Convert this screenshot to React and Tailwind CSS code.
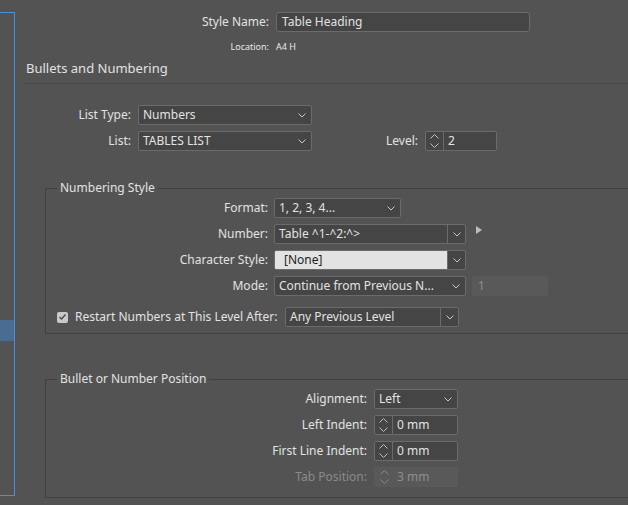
import React from "react";

const Chevron = () => (
  <svg width="8" height="5" viewBox="0 0 8 5" className="text-[#c8c8c8]">
    <polyline points="0.5,0.5 4,4 7.5,0.5" fill="none" stroke="currentColor" strokeWidth="1" />
  </svg>
);

const UpDown = () => (
  <svg width="9" height="14" viewBox="0 0 9 14" className="text-[#bdbdbd]">
    <polyline points="0.5,4.5 4.5,0.5 8.5,4.5" fill="none" stroke="currentColor" strokeWidth="1" />
    <polyline points="0.5,9.5 4.5,13.5 8.5,9.5" fill="none" stroke="currentColor" strokeWidth="1" />
  </svg>
);

const Select = ({ w, value, split, light }) => (
  <div className={`h-[20px] flex shrink-0 border border-[#6b6b6b] rounded-[2px] bg-[#454545] overflow-hidden ${w}`}>
    <div
      className={`flex-1 flex items-center whitespace-nowrap overflow-hidden ${
        light ? "bg-[#e2e2e2] text-[#1e1e1e] pl-[9px]" : "pl-[4px]"
      }`}
    >
      {value}
    </div>
    <div className={`w-[18px] flex items-center justify-center ${split ? "border-l border-[#6b6b6b]" : ""}`}>
      <Chevron />
    </div>
  </div>
);

const Spinner = ({ w, value, disabled }) => (
  <div
    className={`h-[20px] flex shrink-0 rounded-[2px] ${w} ${
      disabled ? "bg-[#595959] text-[#8e8e8e] border border-[#595959]" : "bg-[#454545] border border-[#6b6b6b]"
    }`}
  >
    <div
      className={`w-[18px] flex items-center justify-center ${disabled ? "opacity-50" : "border-r border-[#6b6b6b]"}`}
    >
      <UpDown />
    </div>
    <div className="pl-[4px] flex items-center">{value}</div>
  </div>
);

const Row = ({ label, labelW, gap, children, dim, className = "" }) => (
  <div className={`flex items-center h-[20px] ${className}`}>
    <div className={`text-right whitespace-nowrap shrink-0 ${labelW} ${gap} ${dim ? "text-[#8a8a8a]" : ""}`}>
      {label}
    </div>
    {children}
  </div>
);

export default function App() {
  return (
    <div
      className="w-[628px] h-[505px] bg-[#535353] text-[#e2e2e2] text-[12px] leading-[16px] flex overflow-hidden"
      style={{ fontFamily: '"Noto Sans", "Open Sans", sans-serif' }}
    >
      {/* left list panel */}
      <div className="w-[15px] h-[484px] mt-[12px] shrink-0 border-t border-r border-b border-[#4b8fd8]">
        <div className="h-[307px]" />
        <div className="h-[21px] bg-[#4a6b92]" />
      </div>

      <div className="flex-1 flex flex-col min-w-0">
        <Row label="Style Name:" labelW="w-[254px]" gap="mr-[7px]" className="mt-[12px]">
          <div className="w-[254px] h-[20px] flex items-center pl-[5px] bg-[#454545] border border-[#6b6b6b] rounded-[3px] shrink-0">
            Table Heading
          </div>
        </Row>

        <div className="flex items-center h-[12px] mt-[9px] text-[9px] leading-[12px] text-[#e8e8e8]">
          <div className="w-[254px] mr-[7px] text-right">Location:</div>
          <div>A4 H</div>
        </div>

        <div className="ml-[10px] mt-[7px]">
          <div className="pl-[1px] h-[16px] text-[13px] leading-[16px]">Bullets and Numbering</div>
          <div className="mt-[7px] h-px bg-[#474747]" />
        </div>

        <Row label="List Type:" labelW="w-[116px]" gap="mr-[7px]" className="mt-[21px]">
          <Select w="w-[174px]" value="Numbers" />
        </Row>
        <Row label="List:" labelW="w-[116px]" gap="mr-[7px]" className="mt-[6px]">
          <Select w="w-[174px]" value="TABLES LIST" />
          <div className="w-[106px] mr-[7px] text-right">Level:</div>
          <Spinner w="w-[72px]" value="2" />
        </Row>

        <fieldset className="ml-[30px] mt-[29px] w-[620px] shrink-0 border border-[#414141] pb-[6px]">
          <legend className="ml-[11px] px-[3px] leading-[16px]">Numbering Style</legend>
          <Row label="Format:" labelW="w-[222px]" gap="mr-[6px]" className="mt-[2px]">
            <Select w="w-[127px]" value="1, 2, 3, 4..." />
          </Row>
          <Row label="Number:" labelW="w-[222px]" gap="mr-[6px]" className="mt-[6px]">
            <Select w="w-[192px]" value="Table ^1-^2:^>" split />
            <svg width="6" height="8" viewBox="0 0 6 8" className="ml-[10px] self-start mt-[2px]">
              <polygon points="0,0 6,4 0,8" fill="#bcbcbc" />
            </svg>
          </Row>
          <Row label="Character Style:" labelW="w-[222px]" gap="mr-[6px]" className="mt-[6px]">
            <Select w="w-[192px]" value="[None]" split light />
          </Row>
          <Row label="Mode:" labelW="w-[222px]" gap="mr-[6px]" className="mt-[6px]">
            <Select w="w-[192px]" value="Continue from Previous N..." />
            <div className="ml-[6px] w-[76px] h-[20px] bg-[#595959] text-[#8e8e8e] flex items-center pl-[6px] rounded-[2px]">
              1
            </div>
          </Row>
          <div className="flex items-center h-[20px] mt-[11px] pl-[11px]">
            <div className="w-[11px] h-[11px] rounded-[2px] bg-[#c9c9c9] flex items-center justify-center shrink-0">
              <svg width="9" height="8" viewBox="0 0 9 8">
                <polyline points="1.5,4 3.5,6 7.5,1.5" fill="none" stroke="#4a4a4a" strokeWidth="1.4" />
              </svg>
            </div>
            <div className="ml-[7px] w-[202px] mr-[8px] whitespace-nowrap">Restart Numbers at This Level After:</div>
            <Select w="w-[174px]" value="Any Previous Level" split />
          </div>
        </fieldset>

        <fieldset className="ml-[30px] mt-[37px] w-[620px] shrink-0 border border-[#414141] pb-[10px]">
          <legend className="ml-[11px] px-[3px] leading-[16px]">Bullet or Number Position</legend>
          <Row label="Alignment:" labelW="w-[321px]" gap="mr-[7px]" className="mt-[2px]">
            <Select w="w-[84px]" value="Left" />
          </Row>
          <Row label="Left Indent:" labelW="w-[321px]" gap="mr-[7px]" className="mt-[6px]">
            <Spinner w="w-[84px]" value="0 mm" />
          </Row>
          <Row label="First Line Indent:" labelW="w-[321px]" gap="mr-[7px]" className="mt-[6px]">
            <Spinner w="w-[84px]" value="0 mm" />
          </Row>
          <Row label="Tab Position:" labelW="w-[321px]" gap="mr-[7px]" className="mt-[6px]" dim>
            <Spinner w="w-[84px]" value="3 mm" disabled />
          </Row>
        </fieldset>
      </div>
    </div>
  );
}
